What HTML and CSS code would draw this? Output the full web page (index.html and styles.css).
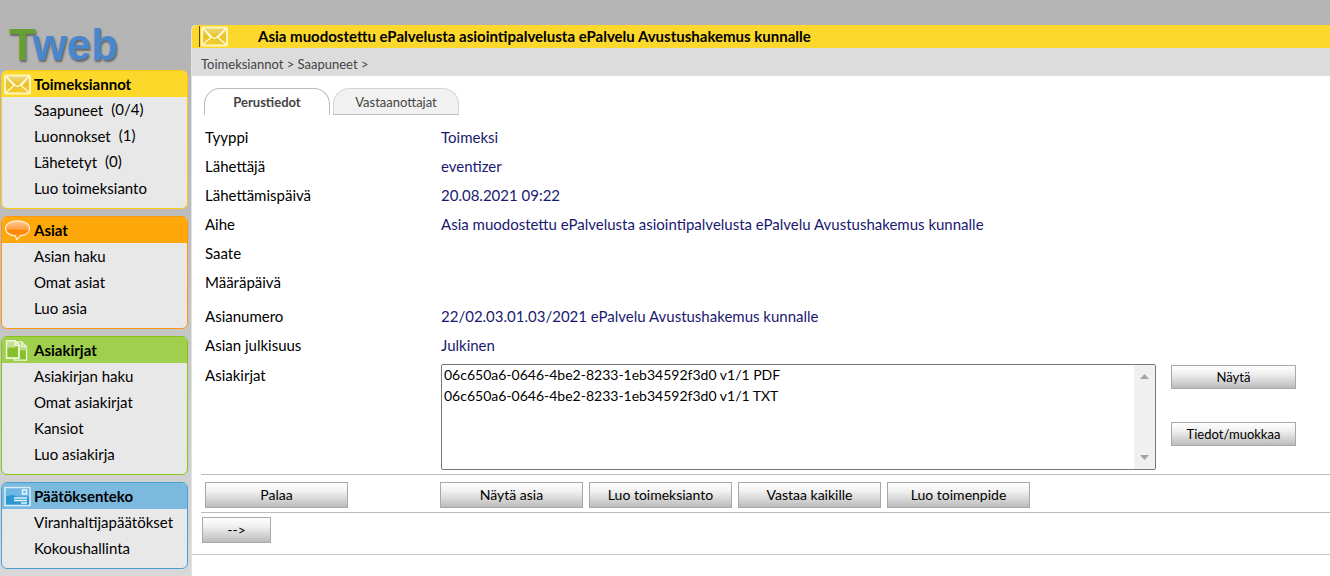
FILE: index.html
```html
<!DOCTYPE html>
<html lang="fi">
<head>
<meta charset="utf-8">
<meta name="viewport" content="width=device-width, initial-scale=1">
<title>Tweb</title>
<link rel="stylesheet" href="styles.css">
</head>
<body>
<svg class="defs" aria-hidden="true">
  <defs>
    <linearGradient id="gold" x1="0" y1="0" x2="0" y2="1"><stop offset="0" stop-color="#ecd98a"/><stop offset="0.5" stop-color="#e9c226"/><stop offset="1" stop-color="#f5cf35"/></linearGradient>
    <linearGradient id="amber" x1="0" y1="0" x2="0" y2="1"><stop offset="0" stop-color="#ffc98f"/><stop offset="0.45" stop-color="#ffa044"/><stop offset="0.5" stop-color="#ff8400"/><stop offset="1" stop-color="#ff9a20"/></linearGradient>
    <symbol id="envelope" viewBox="0 0 27 20">
      <rect x="1" y="1" width="25" height="18" rx="1" fill="url(#gold)" stroke="#fff5b8" stroke-width="2"/>
      <path d="M2 2l8 9-8 7M25 2l-8 9 8 7M2 2l9.500 9q2 1.800 4 0L25 2" fill="none" stroke="#fffbe0" stroke-width="1.200"/>
    </symbol>
  </defs>
</svg>
<div class="page">
  <aside class="sidebar">
    <div class="logo"><span class="logo-t">T</span>web</div>
    <nav class="panels">
      <section class="panel yellow">
        <h2><svg class="icon"><use href="#envelope"/></svg>Toimeksiannot</h2>
        <ul>
          <li><a href="#">Saapuneet</a> <span class="count">(0/4)</span></li>
          <li><a href="#">Luonnokset</a> <span class="count">(1)</span></li>
          <li><a href="#">Lähetetyt</a> <span class="count">(0)</span></li>
          <li><a href="#">Luo toimeksianto</a></li>
        </ul>
      </section>
      <section class="panel orange">
        <h2><svg class="icon" viewBox="0 0 27 22"><path d="M13.500 1C6.500 1 1 4.300 1 8.800s4.500 7.500 10.500 7.800l1 4 4.300-4.200C22 15.700 26 12.800 26 8.800 26 4.300 20.500 1 13.500 1z" fill="url(#amber)" stroke="#fff0d8" stroke-width="1.300"/></svg>Asiat</h2>
        <ul>
          <li><a href="#">Asian haku</a></li>
          <li><a href="#">Omat asiat</a></li>
          <li><a href="#">Luo asia</a></li>
        </ul>
      </section>
      <section class="panel green">
        <h2><svg class="icon" viewBox="0 0 27 22"><g stroke="#f0fae0" stroke-width="1.300"><path d="M10 2h8l5 5v14H10z" fill="#86c02c"/><path d="M11 3h7v4h5v4H11z" fill="#b9da80" stroke="none"/><path d="M18 2v5h5" fill="#c9e59a"/><path d="M2 1h9l4 4v14H2z" fill="#86c02c"/><path d="M2 1h9v7H2z" fill="#c3e08f" stroke="none"/><path d="M11 1v5h4" fill="#c9e59a"/><path d="M2 1h9l4 4v14H2z" fill="none"/></g></svg>Asiakirjat</h2>
        <ul>
          <li><a href="#">Asiakirjan haku</a></li>
          <li><a href="#">Omat asiakirjat</a></li>
          <li><a href="#">Kansiot</a></li>
          <li><a href="#">Luo asiakirja</a></li>
        </ul>
      </section>
      <section class="panel blue">
        <h2><svg class="icon" viewBox="0 0 27 20"><rect x="1" y="1" width="25" height="18" fill="#6bb6e2" stroke="#d6edfa" stroke-width="1.500"/><path d="M2 10q6-3 11 0h12v8H2z" fill="#2d97d1"/><g fill="none" stroke="#e8f6ff" stroke-width="1.500"><path d="M18.500 3.500h4v4h-4zM10 11.500h13M10 14h13M17 16.500h6"/></g></svg>Päätöksenteko</h2>
        <ul>
          <li><a href="#">Viranhaltijapäätökset</a></li>
          <li><a href="#">Kokoushallinta</a></li>
        </ul>
      </section>
    </nav>
  </aside>
  <main class="main">
    <header class="title"><span class="title-icon"><svg class="icon"><use href="#envelope"/></svg></span><h1>Asia muodostettu ePalvelusta asiointipalvelusta ePalvelu Avustushakemus kunnalle</h1></header>
    <div class="crumbs">Toimeksiannot &gt; Saapuneet &gt;</div>
    <div class="tabs" role="tablist">
      <button type="button" class="tab active" role="tab" aria-selected="true">Perustiedot</button>
      <button type="button" class="tab" role="tab" aria-selected="false">Vastaanottajat</button>
    </div>
    <form>
      <dl class="fields">
        <dt>Tyyppi</dt><dd>Toimeksi</dd>
        <dt>Lähettäjä</dt><dd>eventizer</dd>
        <dt>Lähettämispäivä</dt><dd>20.08.2021 09:22</dd>
        <dt>Aihe</dt><dd>Asia muodostettu ePalvelusta asiointipalvelusta ePalvelu Avustushakemus kunnalle</dd>
        <dt>Saate</dt><dd></dd>
        <dt>Määräpäivä</dt><dd></dd>
      </dl>
      <dl class="fields second">
        <dt>Asianumero</dt><dd>22/02.03.01.03/2021 ePalvelu Avustushakemus kunnalle</dd>
        <dt>Asian julkisuus</dt><dd>Julkinen</dd>
      </dl>
      <div class="documents">
        <label for="docs">Asiakirjat</label>
        <div class="listbox">
          <select id="docs" size="5">
            <option>06c650a6-0646-4be2-8233-1eb34592f3d0 v1/1 PDF</option>
            <option>06c650a6-0646-4be2-8233-1eb34592f3d0 v1/1 TXT</option>
          </select>
          <div class="scroll" aria-hidden="true"><svg viewBox="0 0 9 5"><path d="M0 5l4.500-5L9 5z"/></svg><svg viewBox="0 0 9 5"><path d="M0 0h9L4.500 5z"/></svg></div>
        </div>
        <div class="side-buttons">
          <button type="button" class="btn small">Näytä</button>
          <button type="button" class="btn small">Tiedot/muokkaa</button>
        </div>
      </div>
      <div class="actions">
        <div class="back"><button type="button" class="btn wide">Palaa</button></div>
        <button type="button" class="btn wide">Näytä asia</button>
        <button type="button" class="btn wide">Luo toimeksianto</button>
        <button type="button" class="btn wide">Vastaa kaikille</button>
        <button type="button" class="btn wide">Luo toimenpide</button>
      </div>
      <div class="next"><button type="button" class="btn">--&gt;</button></div>
    </form>
  </main>
</div>
</body>
</html>
```
FILE: styles.css
```css
* { box-sizing: border-box; }
body {
  margin: 0;
  font: 15px/20px Lato, Carlito, "Liberation Sans", sans-serif;
  color: #000;
}
h1, h2, ul, dl, dd { margin: 0; padding: 0; }
button, select { font: inherit; color: inherit; }
.defs { position: absolute; width: 0; height: 0; }
.page {
  display: flex;
  min-height: 100vh;
  background: linear-gradient(#b4b4b4, #b7b7b7 25%, #d8d8d8);
}
.sidebar { flex: 0 0 191px; padding: 0 3px 6px 1px; }
.logo {
  height: 70px;
  padding: 24px 0 0 8px;
  font: bold 44px/42px "Liberation Sans", sans-serif;
  color: #4a86cc;
  text-shadow: 1px 2px 2px #666;
}
.logo-t { color: #66a033; }
.panels { display: flex; flex-direction: column; gap: 7px; }
.panel { border: 1px solid var(--edge); border-radius: 6px; background: #e8e8e8; }
.panel h2 {
  display: flex;
  align-items: center;
  gap: 3px;
  height: 26px;
  padding-left: 2px;
  border-radius: 5px 5px 0 0;
  background: var(--fill);
  font-size: 15px;
}
.icon { flex: none; width: 27px; height: 21px; }
.yellow { --edge: #fdc913; --fill: #fcd82a; }
.orange { --edge: #fd9612; --fill: #ffa80b; }
.green { --edge: #86c516; --fill: #9fcf4c; }
.blue { --edge: #46a0d6; --fill: #7cb9df; }
.panel ul { list-style: none; padding: 0 0 7px 32px; }
.panel li { display: flex; gap: 8px; height: 26px; line-height: 27px; white-space: nowrap; }
.panel a { color: inherit; text-decoration: none; }
.count { line-height: 24px; }
.main {
  flex: 1;
  min-width: 0;
  margin-top: 25px;
  border-left: 1px solid #e2e2e2;
  border-radius: 5px 0 0 0;
  background: #fff;
}
.title {
  display: flex;
  align-items: center;
  gap: 30px;
  height: 23px;
  padding-left: 7px;
  border-radius: 5px 0 0 0;
  background: #fbd82b;
}
.title-icon { display: flex; padding-left: 1px; border-left: 1px solid #5b4b00; }
.title h1 { font-size: 15px; line-height: 23px; white-space: nowrap; }
.crumbs {
  height: 28px;
  padding-left: 9px;
  background: #dcdcdc;
  color: #444;
  font-size: 13px;
  line-height: 32px;
}
.tabs { display: flex; padding: 12px 0 0 12px; }
.tab {
  width: 126px;
  height: 27px;
  border: 1px solid #d4d4d4;
  border-bottom-color: #bbb;
  border-radius: 16px 16px 0 0;
  background: #f1f1f1;
  color: #444;
  font-size: 13px;
}
.tab.active {
  margin-right: 3px;
  border-color: #bbb;
  border-bottom-color: transparent;
  background: #fff;
  font-weight: bold;
}
.fields { display: grid; grid-template-columns: 236px 1fr; grid-auto-rows: 29px; padding: 8px 34px 0 13px; line-height: 28px; }
.fields.second { padding-top: 5px; }
.fields dd { color: #191970; }
.documents {
  display: grid;
  grid-template-columns: 236px 1fr 125px;
  padding: 4px 34px 4px 13px;
}
.documents label { line-height: 22px; }
.listbox { display: flex; height: 106px; margin-right: 15px; border: 1px solid #767676; border-radius: 2px; overflow: hidden; }
.listbox select { flex: 1; min-width: 0; height: 104px; padding: 0; border: 0; outline: 0; background: #fff; font-size: 14px; overflow: hidden; }
.listbox option { min-height: 21px; padding: 1px 2px 0; line-height: 20px; }
.scroll { display: flex; flex-direction: column; justify-content: space-between; align-items: center; width: 21px; padding: 9px 0; background: #f0f0f0; }
.scroll svg { width: 9px; height: 5px; fill: #a3a3a3; }
.side-buttons { display: flex; flex-direction: column; gap: 33px; padding-top: 1px; }
.btn { height: 26px; padding: 0; border: 1px solid #a8a8a8; background: linear-gradient(#fff, #f0f0f0 35%, #bcbcbc); }
.btn.small { height: 24px; font-size: 13px; }
.btn.wide { width: 143px; font-size: 14px; }
.actions { display: flex; gap: 6px; margin-left: 9px; padding: 7px 0 4px 4px; border: solid #bbb; border-width: 1px 0; }
.back { width: 229px; }
.next { display: flex; padding: 4px 0 11px 10px; border-bottom: 1px solid #c8c8c8; }
.next .btn { width: 69px; font-size: 14px; }
```
